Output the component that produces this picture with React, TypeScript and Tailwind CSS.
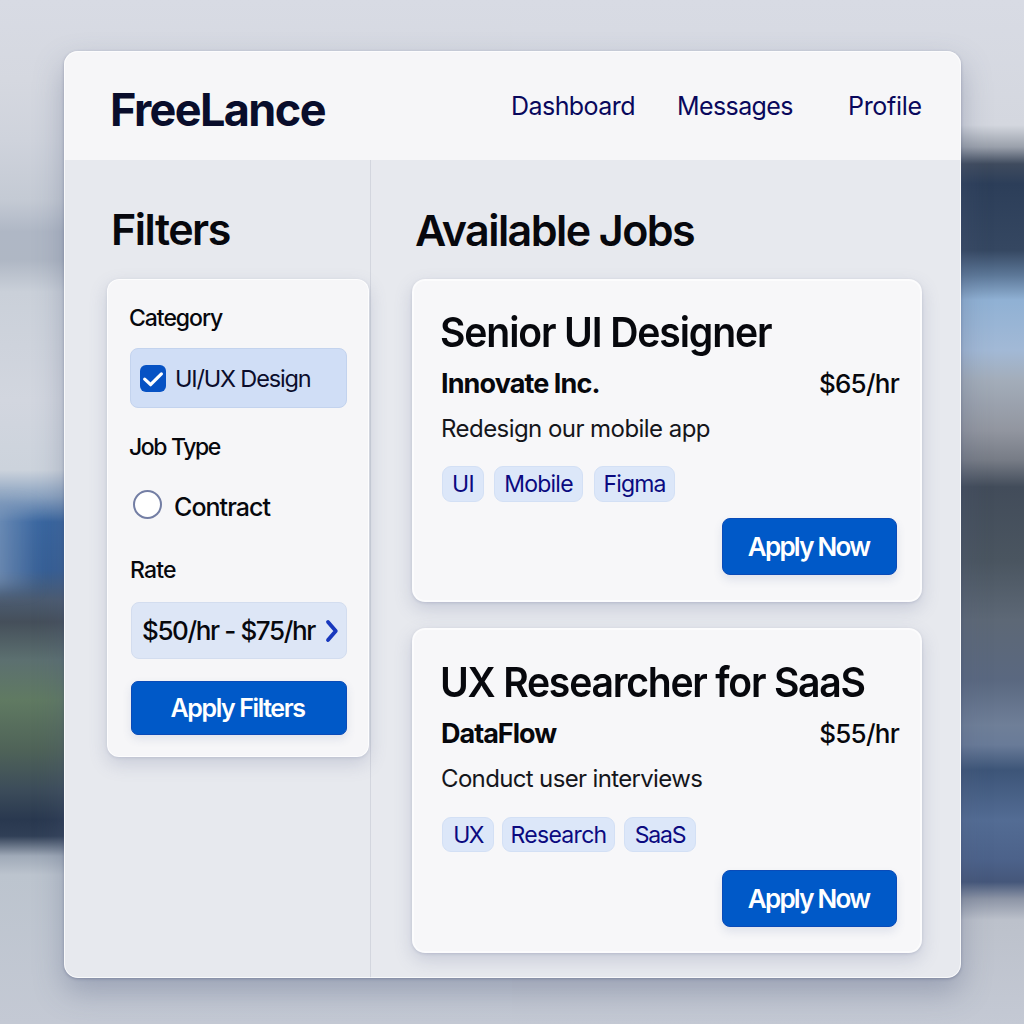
import type { ReactNode } from "react";

type Tag = { label: string; box: string; text: string };
type Job = {
  title: string;
  titleClass: string;
  company: string;
  companyClass: string;
  rate: string;
  description: string;
  descriptionClass: string;
  tags: Tag[];
  tagRow: string;
  actionRow: string;
  card: string;
};

const jobs: Job[] = [
  {
    title: "Senior UI Designer",
    titleClass: "tracking-[-1.2px]",
    company: "Innovate Inc.",
    companyClass: "tracking-[-0.9px]",
    rate: "$65/hr",
    description: "Redesign our mobile app",
    descriptionClass: "tracking-[-0.55px]",
    tags: [
      { label: "UI", box: "w-[42px]", text: "tracking-[-0.6px]" },
      { label: "Mobile", box: "ml-[10px] w-[89px]", text: "tracking-[-0.76px]" },
      { label: "Figma", box: "ml-[11px] w-[81px]", text: "tracking-[-0.85px]" },
    ],
    tagRow: "mt-[21px] h-[36px]",
    actionRow: "mt-[16px]",
    card: "h-[323px] pt-[29px]",
  },
  {
    title: "UX Researcher for SaaS",
    titleClass: "tracking-[-1.3px]",
    company: "DataFlow",
    companyClass: "tracking-[-1px]",
    rate: "$55/hr",
    description: "Conduct user interviews",
    descriptionClass: "tracking-[-0.65px]",
    tags: [
      { label: "UX", box: "w-[52px]", text: "tracking-[-1.6px]" },
      { label: "Research", box: "ml-[8px] w-[113px]", text: "tracking-[-0.7px]" },
      { label: "SaaS", box: "ml-[9px] w-[72px]", text: "tracking-[-1.2px]" },
    ],
    tagRow: "mt-[22px] h-[35px]",
    actionRow: "mt-[18px]",
    card: "mt-[26px] h-[325px] pt-[30px]",
  },
];

function Backdrop() {
  return (
    <div className="absolute inset-0 flex">
      <div className="relative h-full w-1/2 bg-[linear-gradient(180deg,#d8dbe4_0px,#d5d8e0_80px,#cfd3dc_140px,#c4cad4_200px,#afb7c5_232px,#afb7c4_260px,#cad0d9_292px,#d2d6df_400px,#ccd3dc_470px,#8aa2c0_497px,#38659f_522px,#365f96_570px,#4b5b70_600px,#454f5a_622px,#5c7070_660px,#607a62_700px,#4f6358_750px,#3c4c5a_790px,#29384f_820px,#303f56_836px,#a0aab8_856px,#bcc4ce_875px,#c4c9d4_1024px)]">
        <div className="absolute top-[505px] left-[-20px] h-[84px] w-[60px] bg-linear-to-r from-[#9fb2cb]/70 to-[#9fb2cb]/0 blur-[8px]" />
      </div>
      <div className="h-full w-1/2 bg-[linear-gradient(180deg,#d8dbe4_0px,#d4d7df_125px,#9aa0ab_147px,#3f4b5e_164px,#2c3e59_184px,#354761_250px,#5c7797_275px,#90b1d4_300px,#a2b9d6_350px,#a3adba_380px,#9296a0_430px,#777c86_460px,#424c5a_487px,#4a5560_560px,#5d6876_620px,#5a6880_680px,#6f7f98_725px,#697b98_745px,#3d5578_770px,#536c94_820px,#4c628a_860px,#45577a_882px,#8d95a6_899px,#bcc1cb_920px,#c4c9d4_1024px)]" />
    </div>
  );
}

function Header() {
  return (
    <header className="flex h-[109px] items-center bg-[#f6f6f8] pl-[46px] text-[25px] text-[#09085c]">
      <div className="mt-[9px] w-[401px] text-[45px] leading-[54px] font-bold tracking-[-1.6px] text-[#090d2b]">
        FreeLance
      </div>
      <nav className="mt-[1px] flex leading-[32px]">
        <a className="w-[166px] tracking-[-0.55px]">Dashboard</a>
        <a className="w-[171px] tracking-[-0.6px]">Messages</a>
        <a className="tracking-[-0.3px]">Profile</a>
      </nav>
    </header>
  );
}

function FilterLabel({ className, children }: { className: string; children: ReactNode }) {
  return <div className={`h-[32px] text-[23px] leading-[34px] font-[450] ${className}`}>{children}</div>;
}

function Filters() {
  return (
    <aside className="w-[307px] shrink-0 border-r border-[#d3d6de] pl-[43px]">
      <h2 className="mt-[39px] h-[60px] pl-[4px] text-[43px] leading-[60px] font-semibold tracking-[-1.5px]">
        Filters
      </h2>
      <section className="mt-[20px] h-[478px] w-[262px] rounded-[12px] border border-white/80 bg-[#f6f6f8] px-[22px] pt-[21px] shadow-[0_7px_18px_rgba(90,100,140,0.22),0_1px_3px_rgba(90,100,140,0.15)]">
        <FilterLabel className="-ml-px tracking-[-1.05px]">Category</FilterLabel>
        <label className="mt-[15px] flex h-[60px] w-[217px] items-center rounded-[8px] border border-[#c3d3ee] bg-[#d0def6] pl-[9px]">
          <span className="flex h-[27px] w-[26px] items-center justify-center rounded-[6px] bg-[#0652c4]">
            <svg viewBox="0 0 26 27" className="h-[27px] w-[26px]" fill="none" stroke="white" strokeWidth="3.2" strokeLinecap="round" strokeLinejoin="round">
              <path d="M4.7 14.2 10.6 19.7 21.4 8.9" />
            </svg>
          </span>
          <span className="pt-[2px] pl-[9px] text-[23.5px] leading-[32px] tracking-[-1.17px] whitespace-nowrap text-[#0b0d2c]">
            UI/UX Design
          </span>
        </label>
        <FilterLabel className="-ml-px mt-[22px] tracking-[-1.38px]">Job Type</FilterLabel>
        <label className="mt-[28px] flex h-[32px] items-center pl-[3px]">
          <span className="-mt-[3px] h-[29px] w-[29px] rounded-full border-2 border-[#737ea4] bg-white" />
          <span className="pt-px pl-[12px] text-[25px] leading-[32px] font-[450] tracking-[-0.95px]">Contract</span>
        </label>
        <FilterLabel className="mt-[31px] tracking-[-0.8px]">Rate</FilterLabel>
        <button className="mt-[17px] ml-[1px] flex h-[57px] w-[216px] items-center rounded-[8px] border border-[#d3ddef] bg-[#dde6f6] pl-[10px]">
          <span className="w-[183px] pt-px text-left text-[26px] leading-[32px] font-[450] tracking-[-1.38px] whitespace-nowrap">
            $50/hr - $75/hr
          </span>
          <svg viewBox="0 0 14 24" className="mt-[1px] h-[24px] w-[14px]" fill="none" stroke="#1838bd" strokeWidth="3.8" strokeLinecap="round" strokeLinejoin="round">
            <path d="M3 3 10.8 12 3 21" />
          </svg>
        </button>
        <button className="mt-[22px] ml-[1px] block h-[54px] w-[216px] rounded-[7px] border border-[#0a4bb8] bg-[#0059c8] pr-[3px] text-[25px] leading-[32px] font-semibold tracking-[-1.4px] text-white shadow-[0_4px_10px_rgba(60,80,140,0.12)]">
          Apply Filters
        </button>
      </section>
    </aside>
  );
}

function JobCard({ job }: { job: Job }) {
  return (
    <article
      className={`w-[510px] rounded-[13px] border-2 border-white/60 bg-[#f7f7f9] pr-[23px] pl-[28px] shadow-[0_7px_18px_rgba(90,100,140,0.22),0_1px_3px_rgba(90,100,140,0.2)] ${job.card}`}
    >
      <h3 className={`-mt-[2px] -ml-[2px] h-[48px] w-[460px] origin-left scale-x-[0.943] text-[41.5px] leading-[48px] font-semibold whitespace-nowrap ${job.titleClass}`}>
        {job.title}
      </h3>
      <div className="mt-[12px] -ml-px flex h-[32px] items-center justify-between leading-[32px]">
        <span className={`text-[27px] font-[650] ${job.companyClass}`}>{job.company}</span>
        <span className="-mr-[2px] text-[26px] font-[550] tracking-[-0.75px]">{job.rate}</span>
      </div>
      <p className={`mt-[13px] -ml-px h-[32px] text-[24px] leading-[32px] text-[#15161b] ${job.descriptionClass}`}>
        {job.description}
      </p>
      <div className={`flex ${job.tagRow}`}>
        {job.tags.map((tag) => (
          <span
            key={tag.label}
            className={`flex h-full items-center justify-center rounded-[9px] border border-[#d3e0f5] bg-[#dce7f9] text-[23px] leading-[32px] text-[#0b0a80] ${tag.box} ${tag.text}`}
          >
            {tag.label}
          </span>
        ))}
      </div>
      <div className={`flex justify-end ${job.actionRow}`}>
        <button className="h-[57px] w-[175px] rounded-[8px] border border-[#0a4bb8] bg-[#0059c8] pr-[2px] text-[26px] leading-[32px] font-semibold tracking-[-1.75px] text-white shadow-[0_5px_10px_rgba(60,80,140,0.12)]">
          Apply Now
        </button>
      </div>
    </article>
  );
}

export default function App() {
  return (
    <div className="relative h-[1024px] w-[1024px] overflow-hidden pt-[51px] pl-[64px] font-['Inter',sans-serif] text-[#07080d]">
      <Backdrop />
      <div className="relative h-[927px] w-[897px] overflow-hidden rounded-[14px] bg-[#e7e9ee] shadow-[0_14px_30px_rgba(80,92,125,0.35),0_1px_3px_rgba(60,70,110,0.35)]">
        <Header />
        <div className="flex h-[818px]">
          <Filters />
          <main className="pl-[41px]">
            <h2 className="mt-[40px] h-[60px] pl-[3px] text-[43px] leading-[60px] font-semibold tracking-[-1.57px]">
              Available Jobs
            </h2>
            <div className="mt-[19px]">
              {jobs.map((job) => (
                <JobCard key={job.title} job={job} />
              ))}
            </div>
          </main>
        </div>
        <div className="pointer-events-none absolute inset-0 rounded-[14px] border border-white/70" />
      </div>
    </div>
  );
}
